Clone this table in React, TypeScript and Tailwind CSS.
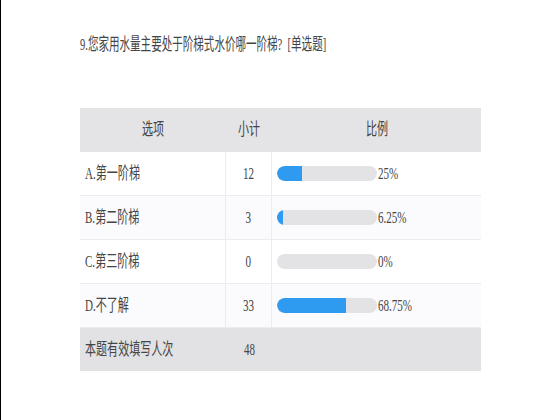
import React from 'react';

const rows = [
  { label: 'A.第一阶梯', count: 12, pct: 25, text: '25%' },
  { label: 'B.第二阶梯', count: 3, pct: 6.25, text: '6.25%' },
  { label: 'C.第三阶梯', count: 0, pct: 0, text: '0%' },
  { label: 'D.不了解', count: 33, pct: 68.75, text: '68.75%' },
];

const font = { fontFamily: '"Liberation Serif", "Noto Sans CJK SC", serif' };

function Narrow({ children, center }: { children: React.ReactNode; center?: boolean }) {
  return (
    <span
      className={
        center
          ? 'inline-block whitespace-nowrap scale-x-[0.65] origin-center'
          : 'inline-block whitespace-nowrap scale-x-[0.65] origin-left'
      }
    >
      {children}
    </span>
  );
}

export default function App() {
  return (
    <div className="w-[560px] h-[420px] bg-white border-l border-black text-[#454545]" style={font}>
      <div className="pl-[79px] pt-[34px]">
        <div className="h-[22px] text-[17px] leading-[22px] w-[480px]">
          <span className="inline-block whitespace-pre scale-x-[0.62] origin-left">
            9.您家用水量主要处于阶梯式水价哪一阶梯?  [单选题]
          </span>
        </div>

        <div className="mt-[52px] w-[401px] text-[17px]">
          <div className="grid grid-cols-[146px_46px_209px] h-[44px] bg-[#e4e4e6] items-center">
            <div className="text-center"><Narrow center>选项</Narrow></div>
            <div className="text-center"><Narrow center>小计</Narrow></div>
            <div className="text-center"><Narrow center>比例</Narrow></div>
          </div>

          {rows.map((r, i) => (
            <div
              key={r.label}
              className={
                i % 2 === 1
                  ? 'grid grid-cols-[146px_46px_209px] h-[44px] bg-[#fbfbfd] border-b border-[#ececee]'
                  : 'grid grid-cols-[146px_46px_209px] h-[44px] bg-white border-b border-[#ececee]'
              }
            >
              <div className="flex items-center pl-[5px] border-r border-[#ececee]">
                <Narrow>{r.label}</Narrow>
              </div>
              <div className="flex items-center justify-center border-r border-[#ececee]">
                <Narrow center>{r.count}</Narrow>
              </div>
              <div className="flex items-center pl-[5px]">
                <div className="w-[100px] h-[15px] rounded-full bg-[#e3e3e5] overflow-hidden">
                  <div className="h-full bg-[#2e9bf0] rounded-l-full" style={{ width: `${r.pct}%` }} />
                </div>
                <div className="pl-[1px]">
                  <Narrow>{r.text}</Narrow>
                </div>
              </div>
            </div>
          ))}

          <div className="grid grid-cols-[146px_46px_209px] h-[43px] bg-[#e2e2e4] items-center">
            <div className="pl-[5px]"><Narrow>本题有效填写人次</Narrow></div>
            <div className="text-center"><Narrow center>48</Narrow></div>
            <div />
          </div>
        </div>
      </div>
    </div>
  );
}
